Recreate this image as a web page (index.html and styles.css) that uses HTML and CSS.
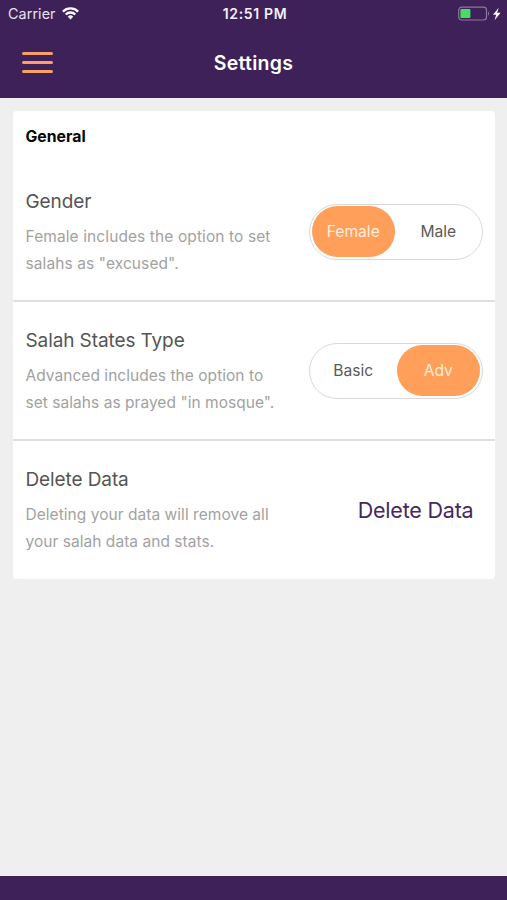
FILE: index.html
```html
<!DOCTYPE html>
<html lang="en">
<head>
<meta charset="utf-8">
<title>Settings</title>
<link rel="stylesheet" href="styles.css">
</head>
<body>
<div class="app">
  <header class="header">
    <div class="status">
      <div class="carrier"><span class="carrier-name">Carrier</span>
        <svg class="wifi" width="17" height="13" viewBox="0 0 17 13" fill="none" stroke="#fff" stroke-width="2.3">
          <path d="M.9 4.6a10.8 10.8 0 0 1 15.2 0M3.7 7.5a6.8 6.8 0 0 1 9.6 0"/>
          <path d="M8.5 12.4 5.8 9.7a3.8 3.8 0 0 1 5.4 0z" fill="#fff" stroke="none"/>
        </svg>
      </div>
      <div class="time">12:51 PM</div>
      <svg class="battery" width="44" height="16" viewBox="0 0 44 16">
        <rect x=".7" y="1.2" width="27.8" height="12.8" rx="3" fill="none" stroke="#8b7a9e" stroke-width="1.2"/>
        <rect x="2.4" y="3" width="10" height="9" rx="1" fill="#4cd964"/>
        <path d="M30 5.3q2.2 2.3 0 4.8z" fill="#8b7a9e"/>
        <path d="M40.7 1.8 35 8.8h3.2l-1.6 5.4 6-7.4h-3.5z" fill="#fff"/>
      </svg>
    </div>
    <div class="navbar">
      <button class="menu" aria-label="Menu"><i></i><i></i><i></i></button>
      <h1 class="title">Settings</h1>
    </div>
  </header>
  <main class="content">
    <section class="card">
      <h2 class="section">General</h2>
      <div class="row">
        <div class="info">
          <h3 class="name">Gender</h3>
          <p class="desc desc-wide">Female includes the option to set<br>salahs as "excused".</p>
        </div>
        <div class="switch"><span class="option on">Female</span><span class="option">Male</span></div>
      </div>
      <div class="row">
        <div class="info">
          <h3 class="name">Salah States Type</h3>
          <p class="desc">Advanced includes the option to<br>set salahs as prayed "in mosque".</p>
        </div>
        <div class="switch"><span class="option">Basic</span><span class="option on">Adv</span></div>
      </div>
      <div class="row">
        <div class="info">
          <h3 class="name">Delete Data</h3>
          <p class="desc">Deleting your data will remove all<br>your salah data and stats.</p>
        </div>
        <button class="delete">Delete Data</button>
      </div>
    </section>
  </main>
  <footer class="footer"></footer>
</div>
</body>
</html>
```
FILE: styles.css
```css
* { box-sizing: border-box; }
body, h1, h2, h3, p { margin: 0; }
body { font-family: Inter, "Liberation Sans", sans-serif; background: #efefef; }
button { border: 0; padding: 0; background: none; font-family: inherit; }
.app { height: 900px; display: flex; flex-direction: column; overflow: hidden; }
.header { height: 98px; background: #3e2159; color: #fff; }
.status { height: 27px; padding: 0 5px 0 8px; display: grid; grid-template-columns: 1fr auto 1fr; align-items: center; }
.carrier { display: flex; align-items: center; gap: 6px; }
.carrier-name { font-size: 14.3px; color: #e8e3ee; letter-spacing: .1px; }
.time { font-size: 14px; font-weight: 600; color: #f4f0f8; letter-spacing: .65px; }
.battery { justify-self: end; }
.navbar { height: 71px; padding: 0 22px; display: grid; grid-template-columns: 31px 1fr 31px; align-items: center; }
.menu { display: flex; flex-direction: column; gap: 6px; }
.menu i { height: 3.3px; width: 31px; border-radius: 2px; background: #f8a066; }
.title { text-align: center; font-size: 19.5px; font-weight: 600; letter-spacing: .25px; }
.content { flex: 1; padding: 13px 12px 0 13px; }
.card { background: #fff; border-radius: 4px; overflow: hidden; }
.section { height: 52px; padding-left: 12.5px; font-size: 15.8px; line-height: 52px; font-weight: 700; color: #080808; }
.row { height: 139px; padding: 0 12.5px 0 12.5px; display: flex; align-items: center; justify-content: space-between; border-bottom: 2px solid #dfdfdf; }
.row:last-child { height: 137.5px; border-bottom: 0; }
.info { padding-top: 2px; }
.name { font-size: 19px; line-height: 26px; font-weight: 400; color: #555; margin-bottom: 8px; letter-spacing: -.1px; }
.desc { font-size: 15.5px; line-height: 27px; color: #a2a2a2; white-space: nowrap; letter-spacing: .04px; }
.desc-wide { letter-spacing: .1px; }
.switch { width: 173.5px; height: 56px; padding: 1.5px; border: 1.5px solid #d8d8d8; border-radius: 28px; display: flex; justify-content: space-between; }
.option { width: 83.5px; border-radius: 26px; display: flex; align-items: center; justify-content: center; font-size: 15.6px; color: #5a5a5a; }
.option.on { background: #ff9f5a; color: #ffeddc; }
.delete { margin-right: 9px; font-size: 21.5px; color: #432861; letter-spacing: -.2px; }
.footer { height: 24px; background: #3e2159; }
```
